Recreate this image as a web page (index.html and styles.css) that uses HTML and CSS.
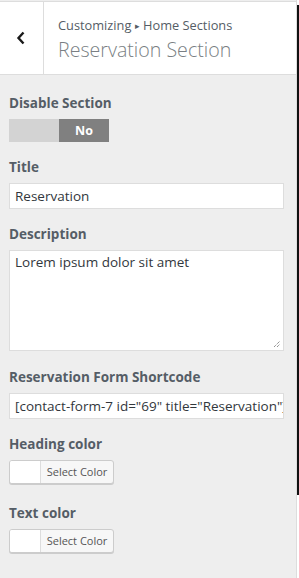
FILE: index.html
```html
<!DOCTYPE html>
<html>
<head>
<meta charset="utf-8">
<link rel="stylesheet" href="styles.css">
</head>
<body>
<div class="layout">
  <div class="panel">
    <div class="header">
      <div class="back">
        <svg width="10" height="14" viewBox="0 0 10 14"><path d="M7.5 1.5 L2.5 7 L7.5 12.5" fill="none" stroke="#1a1a1a" stroke-width="2.4"/></svg>
      </div>
      <div class="titles">
        <div class="crumb">Customizing <span class="arrow">▸</span> Home Sections</div>
        <div class="section-title">Reservation Section</div>
      </div>
    </div>
    <div class="controls">
      <div class="control">
        <div class="label">Disable Section</div>
        <div class="toggle"><span class="off"></span><span class="on">No</span></div>
      </div>
      <div class="control">
        <div class="label">Title</div>
        <div class="input">Reservation</div>
      </div>
      <div class="control">
        <div class="label">Description</div>
        <div class="textarea">Lorem ipsum dolor sit amet
          <svg class="grip" width="8" height="8" viewBox="0 0 8 8"><path d="M1 7 L7 1 M4 7 L7 4" stroke="#666" stroke-width="1" stroke-dasharray="1 1"/></svg>
        </div>
      </div>
      <div class="control control-shortcode">
        <div class="label">Reservation Form Shortcode</div>
        <div class="input clip">[contact-form-7 id="69" title="Reservation"]</div>
      </div>
      <div class="control">
        <div class="label">Heading color</div>
        <div class="color-btn"><span class="swatch"></span><span class="btn-text">Select Color</span></div>
      </div>
      <div class="control control-last">
        <div class="label">Text color</div>
        <div class="color-btn"><span class="swatch"></span><span class="btn-text">Select Color</span></div>
      </div>
    </div>
  </div>
  <div class="preview"><div class="dark"></div></div>
</div>
</body>
</html>
```

FILE: styles.css
```css
html, body {
  margin: 0;
  padding: 0;
  background: #eee;
}
body {
  font-family: "Open Sans", "Noto Sans", sans-serif;
  color: #555d66;
  width: 299px;
  height: 578px;
  overflow: hidden;
}
.layout {
  display: flex;
  height: 578px;
}
.panel {
  width: 296px;
  border-right: 1px solid #ddd;
  background: #eee;
  flex: none;
}
.preview {
  flex: 1;
  background: #fff;
  padding-top: 5px;
}
.dark {
  height: 490px;
  background: #111;
}
.header {
  display: flex;
  height: 72px;
  background: #fff;
  border-top: 1px solid #ddd;
  border-bottom: 1px solid #ddd;
  margin-top: 1px;
}
.back {
  width: 44px;
  border-right: 1px solid #ddd;
  display: flex;
  align-items: center;
  justify-content: center;
  padding-right: 2px;
  box-sizing: border-box;
}
.titles {
  padding: 14px 0 0 14px;
}
.crumb {
  font-size: 12.8px;
  line-height: 18px;
  color: #555d66;
}
.arrow {
  font-size: 9px;
  vertical-align: 1px;
}
.section-title {
  font-size: 19.6px;
  font-weight: 300;
  line-height: 28px;
  color: #7a7f84;
  margin-top: 1px;
}
.controls {
  padding: 18px 12px 0 9px;
  display: flex;
  flex-direction: column;
  gap: 15px;
}
.control-shortcode {
  margin-top: 1px;
}
.control-last {
  margin-top: 4px;
}
.label {
  font-size: 13.5px;
  font-weight: 700;
  line-height: 20px;
  margin-bottom: 6px;
  color: #555d66;
}
.toggle {
  display: flex;
  width: 100px;
  height: 23px;
}
.toggle .off {
  width: 50px;
  background: #d3d3d3;
}
.toggle .on {
  width: 50px;
  background: #808080;
  color: #fff;
  font-weight: 700;
  font-size: 12.5px;
  display: flex;
  align-items: center;
  justify-content: center;
}
.input {
  height: 24px;
  background: #fff;
  border: 1px solid #ddd;
  font-size: 13.5px;
  line-height: 24px;
  padding: 0 6px 0 5px;
  color: #32373c;
  white-space: nowrap;
  overflow: hidden;
}
.textarea {
  position: relative;
  background: #fff;
  border: 1px solid #ddd;
  font-size: 13.5px;
  line-height: 20px;
  padding: 1px 6px 2px 5px;
  box-sizing: border-box;
  height: 101px;
  color: #32373c;
}
.grip {
  position: absolute;
  right: 2px;
  bottom: 2px;
}
.color-btn {
  display: flex;
  width: 103px;
  height: 22px;
  border: 1px solid #ccc;
  border-radius: 3px;
  background: #f7f7f7;
  box-shadow: 0 1px 0 #ccc;
  overflow: hidden;
}
.swatch {
  width: 30px;
  background: #fff;
  border-right: 1px solid #ddd;
}
.btn-text {
  flex: 1;
  font-size: 11px;
  line-height: 22px;
  text-align: center;
  color: #555;
}
```
